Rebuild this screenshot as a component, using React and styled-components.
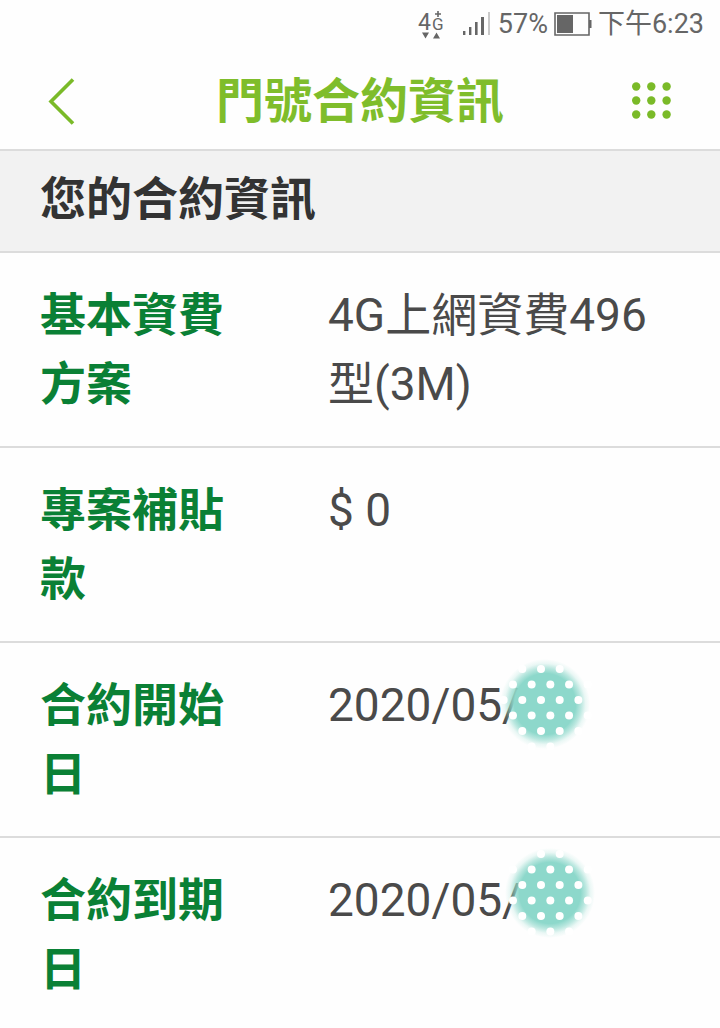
import React from 'react';
import styled, { createGlobalStyle } from 'styled-components';

const GlobalStyle = createGlobalStyle`
  * {
    box-sizing: border-box;
  }

  body {
    margin: 0;
    background: #fefefe;
    font-family: Roboto, "Noto Sans CJK TC", sans-serif;
  }
`;

const StatusBar = styled.div`
  display: flex;
  align-items: center;
  justify-content: flex-end;
  height: 48px;
  padding: 0 16px;
  color: #666;
  font-size: 27px;
  line-height: 32px;
`;

const NetworkType = styled.svg`
  width: 28px;
  height: 32px;
  margin-right: 16px;
  font-family: Roboto, sans-serif;
`;

const Signal = styled.svg`
  width: 28px;
  height: 32px;
  margin-right: 8px;
`;

const Battery = styled.svg`
  width: 38px;
  height: 32px;
  margin: 0 6px;
`;

const Header = styled.header`
  display: flex;
  align-items: center;
  justify-content: space-between;
  padding: 22px 40px 15px;
  border-bottom: 2px solid #dcdcdc;
`;

const IconButton = styled.button`
  display: flex;
  padding: 0;
  border: none;
  background: none;
  color: #7aba28;
  cursor: pointer;
`;

const Title = styled.h1`
  margin: 0;
  color: #7fbd2b;
  font-size: 48px;
  font-weight: 700;
  line-height: 64px;
`;

const SectionTitle = styled.h2`
  margin: 0;
  padding: 14px 40px 17px;
  background: #f2f2f2;
  border-bottom: 2px solid #dcdcdc;
  color: #333;
  font-size: 46px;
  font-weight: 700;
  line-height: 69px;
`;

const InfoList = styled.dl`
  margin: 0;
`;

const InfoRow = styled.div`
  display: flex;
  padding: 28px 40px 27px;
  border-bottom: 2px solid #dcdcdc;
  font-size: 46px;
  line-height: 69px;

  &:last-child {
    padding-bottom: 0;
    border-bottom: none;
  }
`;

const InfoLabel = styled.dt`
  flex: 0 0 45%;
  padding-right: 96px;
  color: #0a8035;
  font-weight: 700;
`;

const InfoValue = styled.dd`
  flex: 1;
  margin: 0;
  color: #4a4a4a;
`;

const Masked = styled.span`
  position: relative;
`;

const Blot = styled.svg`
  position: absolute;
  top: ${props => props.$top}px;
  left: ${props => props.$left}px;
  width: 112px;
  height: 112px;
`;

const rows = [
  { label: '基本資費方案', value: '4G上網資費496型(3M)' },
  { label: '專案補貼款', value: '$ 0' },
  { label: '合約開始日', value: '2020/05/', blot: { id: 'start', top: -30, left: 161, dotX: 52, dotY: 52 } },
  { label: '合約到期日', value: '2020/05/', blot: { id: 'end', top: -36, left: 166, dotX: 47, dotY: 48 } },
];

// staggered dots, every other row is shifted by half a step
const getDots = ({ dotX, dotY }) => {
  const dots = [];
  for (let row = -3; row <= 3; row++) {
    for (let col = -3; col <= 3; col++) {
      const x = dotX + (col + (row % 2 ? 0.5 : 0)) * 18.7;
      const y = dotY + row * 15.5;
      if (Math.hypot(x - 56, y - 56) < 47) {
        dots.push({ x, y });
      }
    }
  }
  return dots;
};

const DotBlot = ({ blot }) => (
  <Blot $top={blot.top} $left={blot.left} viewBox="0 0 112 112" aria-hidden="true">
    <defs>
      <radialGradient id={`fade-${blot.id}`}>
        <stop offset="0" stopColor="#8dd8cb" />
        <stop offset="0.68" stopColor="#8dd8cb" />
        <stop offset="0.8" stopColor="#8dd8cb" stopOpacity="0.6" />
        <stop offset="0.9" stopColor="#8dd8cb" stopOpacity="0.18" />
        <stop offset="1" stopColor="#8dd8cb" stopOpacity="0" />
      </radialGradient>
    </defs>
    <circle cx="56" cy="56" r="45" fill={`url(#fade-${blot.id})`} />
    {getDots(blot).map(dot => (
      <circle key={`${dot.x}-${dot.y}`} cx={dot.x} cy={dot.y} r="4" fill="#fff" />
    ))}
  </Blot>
);

const App = () => (
  <>
    <GlobalStyle />
    <StatusBar>
      <NetworkType viewBox="0 0 28 32" fill="currentColor" aria-label="4G+">
        <text x="0" y="22" fontSize="23">4</text>
        <text x="14" y="22" fontSize="17">G</text>
        <path d="M19.2 3h1.6v2.2H23v1.6h-2.2V9h-1.6V6.8H17V5.2h2.2z" />
        <path d="M4 24.5h7l-3.5 6zM15 30.5h7l-3.5-6z" />
      </NetworkType>
      <Signal viewBox="0 0 28 32" fill="currentColor" aria-label="Signal">
        <path d="M1 23h2.4v4H1zM7 19h2.4v8H7zM13 14h2.6v13H13zM19 9h3v18h-3z" />
        <path d="M26 4h2v23h-2z" opacity="0.35" />
      </Signal>
      <span>57%</span>
      <Battery viewBox="0 0 38 32" fill="currentColor" aria-label="Battery">
        <path d="M1 5h34v22h-34z" fill="none" stroke="currentColor" strokeWidth="1.6" />
        <path d="M3 7h16v18h-16zM35 12h2.5v8h-2.5z" />
      </Battery>
      <span>下午6:23</span>
    </StatusBar>
    <Header>
      <IconButton aria-label="返回">
        <svg width="48" height="48" viewBox="0 0 48 48" fill="none" stroke="currentColor" strokeWidth="3.6">
          <path d="M33 1.5 11 23.5 33 45.5" />
        </svg>
      </IconButton>
      <Title>門號合約資訊</Title>
      <IconButton aria-label="選單">
        <svg width="48" height="48" viewBox="0 0 48 48" fill="currentColor">
          {[8.5, 22.5, 36.5].map(y =>
            [4.2, 19.3, 34.6].map(x => <circle key={`${x}-${y}`} cx={x} cy={y} r="4.2" />)
          )}
        </svg>
      </IconButton>
    </Header>
    <main>
      <SectionTitle>您的合約資訊</SectionTitle>
      <InfoList>
        {rows.map(row => (
          <InfoRow key={row.label}>
            <InfoLabel>{row.label}</InfoLabel>
            <InfoValue>
              {row.blot ? (
                <Masked>
                  {row.value}
                  <DotBlot blot={row.blot} />
                </Masked>
              ) : (
                row.value
              )}
            </InfoValue>
          </InfoRow>
        ))}
      </InfoList>
    </main>
  </>
);

export default App;
